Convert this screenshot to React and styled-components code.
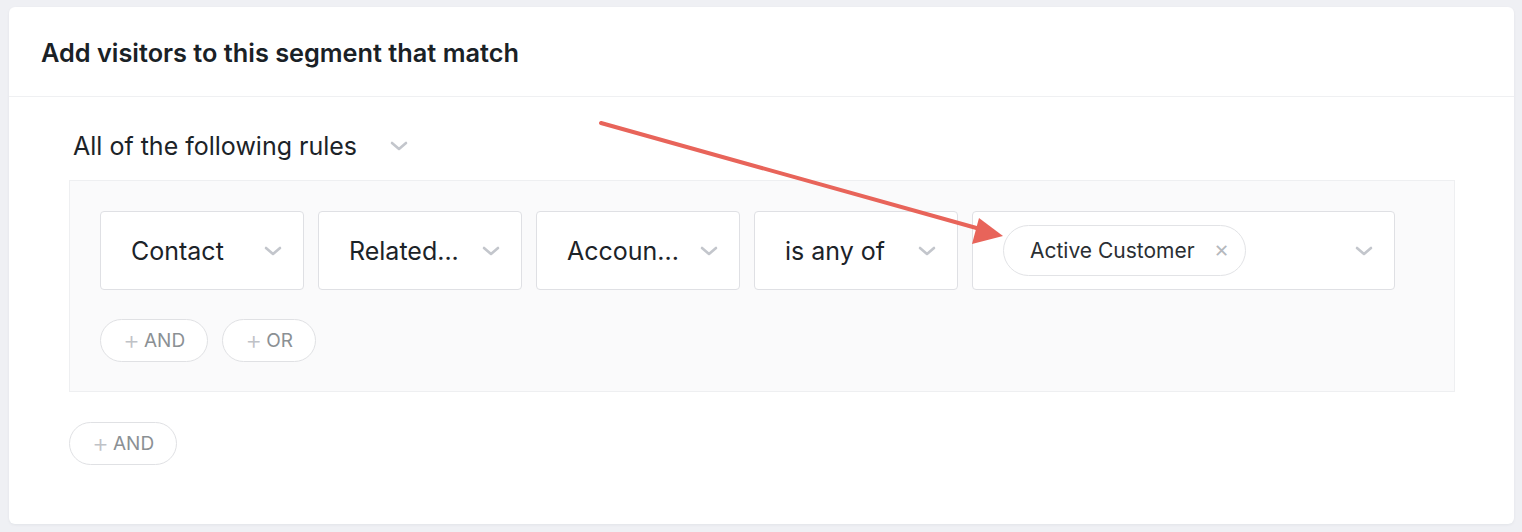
import React from "react";
import styled, {createGlobalStyle} from "styled-components";

const GlobalStyle = createGlobalStyle`
  html, body {
    margin: 0;
    padding: 0;
    background: #eff0f4;
    font-family: Inter, "Noto Sans", sans-serif;
  }
`;

const Page = styled.div`
  padding: 7px 8px 8px 9px;
  position: relative;
`;

const Card = styled.div`
  background: #fff;
  border-radius: 6px;
  box-shadow: 0 1px 3px rgba(20, 30, 50, 0.06);
  height: 517px;
  box-sizing: border-box;
`;

const Header = styled.div`
  height: 90px;
  display: flex;
  align-items: center;
  padding-left: 32px;
  border-bottom: 1px solid #eff0f2;
  box-sizing: border-box;
`;

const Title = styled.h1`
  margin: 0;
  font-size: 25.3px;
  font-weight: 600;
  color: #1a2126;
  padding-top: 2px;
`;

const Body = styled.div`
  padding: 30px 59px 0 60px;
`;

const MatchSelect = styled.div`
  display: flex;
  align-items: center;
  gap: 32px;
  padding-left: 4px;
  height: 38px;
  font-size: 25px;
  color: #1c2328;
  margin-bottom: 15px;
`;

const Group = styled.div`
  background: #fafafb;
  border: 1px solid #eeeff1;
  padding: 30px 30px 29px 30px;
`;

const Row = styled.div`
  display: flex;
  gap: 14px;
`;

const Select = styled.div`
  width: ${props => props.width || 204}px;
  height: 79px;
  box-sizing: border-box;
  background: #fff;
  border: 1px solid #dfe0e4;
  border-radius: 4px;
  display: flex;
  align-items: center;
  justify-content: space-between;
  padding: 0 20px 0 30px;
  font-size: 25px;
  color: #1c2328;
`;

const Chip = styled.div`
  height: 51px;
  box-sizing: border-box;
  border: 1px solid #e2e3e6;
  border-radius: 26px;
  display: flex;
  align-items: center;
  gap: 19px;
  padding: 0 16px 0 26px;
  font-size: 21px;
  color: #2b2f33;
`;

const Remove = styled.span`
  color: #b5b8bd;
  font-size: 18px;
  line-height: 1;
`;

const Actions = styled.div`
  display: flex;
  gap: 14px;
  margin-top: 29px;
`;

const AddButton = styled.button`
  height: 43px;
  padding: 0 22px;
  border: 1px solid #e0e1e4;
  border-radius: 22px;
  background: #fff;
  font-family: Inter, sans-serif;
  font-size: 19px;
  color: #8b9094;
  display: flex;
  align-items: center;
  gap: 4px;
  cursor: pointer;
`;

const Plus = styled.span`
  color: #bfc2c7;
  font-size: 26px;
  font-weight: 300;
  line-height: 1;
  margin-top: -2px;
`;

const Footer = styled.div`
  margin-top: 30px;
`;

const Annotation = styled.svg`
  position: absolute;
  left: 0;
  top: 0;
  pointer-events: none;
`;

const Chevron = () => (
    <svg width="20" height="12" viewBox="0 0 20 12">
        <path d="M3 3 L10 9 L17 3" fill="none" stroke="#c3c6cc" strokeWidth="2.6" strokeLinecap="round" strokeLinejoin="round"/>
    </svg>
);

const fields = ["Contact", "Related...", "Accoun...", "is any of"];

export default function App() {
    return (
        <Page>
            <GlobalStyle/>
            <Card>
                <Header>
                    <Title>Add visitors to this segment that match</Title>
                </Header>
                <Body>
                    <MatchSelect>
                        All of the following rules
                        <Chevron/>
                    </MatchSelect>
                    <Group>
                        <Row>
                            {fields.map(label => (
                                <Select key={label}>
                                    {label}
                                    <Chevron/>
                                </Select>
                            ))}
                            <Select width={423}>
                                <Chip>
                                    Active Customer
                                    <Remove>✕</Remove>
                                </Chip>
                                <Chevron/>
                            </Select>
                        </Row>
                        <Actions>
                            <AddButton><Plus>+</Plus>AND</AddButton>
                            <AddButton><Plus>+</Plus>OR</AddButton>
                        </Actions>
                    </Group>
                    <Footer>
                        <AddButton><Plus>+</Plus>AND</AddButton>
                    </Footer>
                </Body>
            </Card>
            <Annotation width="1522" height="532">
                <line x1="601" y1="123" x2="980" y2="229" stroke="#e8645a" strokeWidth="4" strokeLinecap="round"/>
                <polygon points="1003,236 972,244 979,218" fill="#e8645a"/>
            </Annotation>
        </Page>
    );
}
